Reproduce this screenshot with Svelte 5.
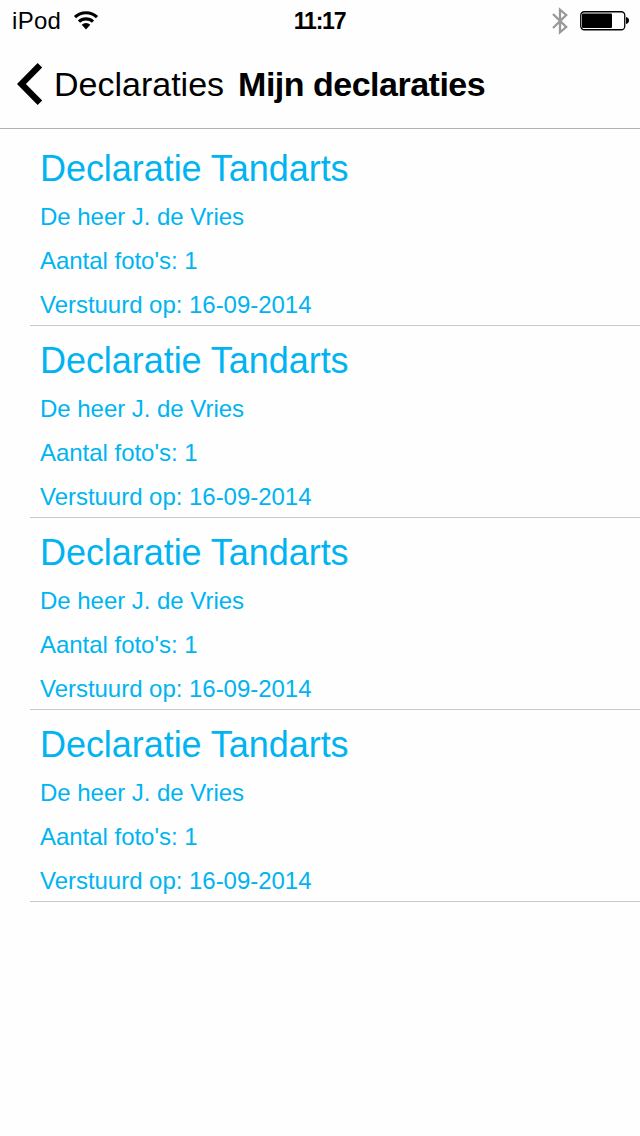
<script lang="ts">
	interface Declaration {
		title: string;
		person: string;
		photos: number;
		sentOn: string;
	}

	const declarations: Declaration[] = [
		{ title: 'Declaratie Tandarts', person: 'De heer J. de Vries', photos: 1, sentOn: '16-09-2014' },
		{ title: 'Declaratie Tandarts', person: 'De heer J. de Vries', photos: 1, sentOn: '16-09-2014' },
		{ title: 'Declaratie Tandarts', person: 'De heer J. de Vries', photos: 1, sentOn: '16-09-2014' },
		{ title: 'Declaratie Tandarts', person: 'De heer J. de Vries', photos: 1, sentOn: '16-09-2014' }
	];
</script>

<div class="screen">
	<div class="status">
		<div class="status__left">
			<span class="status__device">iPod</span>
			<svg width="26" height="20" viewBox="0 0 26 20" fill="none" stroke="#000" stroke-width="3.2">
				<path d="M2 6.2A15.8 15.8 0 0 1 24 6.2" />
				<path d="M6 10.6A10.2 10.2 0 0 1 20 10.6" />
				<path d="M13 18.4 8.7 13.8A6.2 6.2 0 0 1 17.3 13.8Z" fill="#000" stroke="none" />
			</svg>
		</div>
		<span class="status__time">11:17</span>
		<div class="status__right">
			<svg width="16" height="28" viewBox="0 0 16 28" fill="none" stroke="#999" stroke-width="2.3">
				<path d="M1 7 14.2 20 8 25.3V2.7L14.2 8 1 21" />
			</svg>
			<svg width="49" height="20" viewBox="0 0 49 20">
				<rect x="0.75" y="0.75" width="44" height="18" rx="3.5" fill="none" stroke="#000" stroke-width="1.3" />
				<rect x="2" y="2.5" width="30" height="14.5" rx="1" />
				<path d="M46 6C50 6.5 50 12.5 46 13Z" />
			</svg>
		</div>
	</div>

	<header class="nav">
		<button type="button" class="nav__back">
			<svg width="26" height="42" viewBox="0 0 26 42" fill="none" stroke="#000" stroke-width="6.4">
				<path d="M22.9 2.3 4.4 21 22.9 39.7" />
			</svg>
			<span>Declaraties</span>
		</button>
		<h1>Mijn declaraties</h1>
	</header>

	<ul class="list">
		{#each declarations as item}
			<li class="list__item">
				<h2>{item.title}</h2>
				<p>{item.person}</p>
				<p>Aantal foto's: {item.photos}</p>
				<p>Verstuurd op: {item.sentOn}</p>
			</li>
		{/each}
	</ul>
</div>

<style>
	.screen {
		width: 640px;
		height: 1136px;
		overflow: hidden;
		background: #fefefe;
		color: #000;
		font-family: "Liberation Sans", Arial, sans-serif;
	}

	.status {
		display: grid;
		grid-template-columns: 1fr auto 1fr;
		align-items: center;
		box-sizing: border-box;
		height: 40px;
		padding: 2px 11px 0 12px;
	}

	.status__left,
	.status__right {
		display: flex;
		align-items: center;
	}

	.status__left {
		gap: 12px;
	}

	.status__device {
		font-size: 24px;
		letter-spacing: 0.3px;
	}

	.status__time {
		margin-right: 2px;
		font-size: 23px;
		font-weight: bold;
		letter-spacing: -1.2px;
	}

	.status__right {
		justify-content: flex-end;
		gap: 12px;
	}

	.nav {
		display: flex;
		align-items: center;
		height: 88px;
		padding-left: 17px;
		border-bottom: 1px solid #b2b2b2;
	}

	.nav__back {
		display: flex;
		align-items: center;
		gap: 11px;
		padding: 0;
		border: none;
		background: none;
		color: #000;
		font: inherit;
		font-size: 34px;
	}

	h1 {
		margin: 0 0 0 14px;
		font-size: 34px;
		font-weight: bold;
		letter-spacing: -0.5px;
	}

	.list {
		margin: 0;
		padding: 5px 0 0 30px;
		list-style: none;
	}

	.list__item {
		display: flex;
		flex-direction: column;
		gap: 16px;
		padding: 13px 10px 6px;
		border-bottom: 1px solid #c8c7cc;
		color: #00b4f1;
	}

	h2 {
		margin: 0 0 -4px;
		font-size: 36px;
		font-weight: normal;
		line-height: 44px;
		letter-spacing: -0.05px;
	}

	p {
		margin: 0;
		font-size: 24px;
		line-height: 28px;
		letter-spacing: -0.03px;
	}
</style>
